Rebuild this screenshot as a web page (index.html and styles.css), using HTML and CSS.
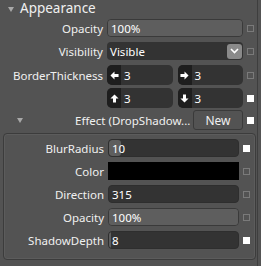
FILE: index.html
```html
<!DOCTYPE html>
<html lang="en">
<head>
<title>Properties</title>
<link rel="stylesheet" href="styles.css">
</head>
<body>
<div class="pane">
<div class="category"><span class="twisty"></span>Appearance</div>

<div class="row first">
<label>Opacity</label>
<div class="field num"><span class="fill" style="width: 100%"></span><span class="val">100%</span></div>
<span class="mark"></span>
</div>

<div class="row">
<label>Visibility</label>
<div class="field select"><span class="val">Visible</span><span class="drop"><svg width="9" height="6" viewBox="0 0 9 6"><path d="M1 1 L4.5 4.5 L8 1" fill="none" stroke="#fff" stroke-width="1.6"/></svg></span></div>
<span class="mark"></span>
</div>

<div class="row">
<label>BorderThickness</label>
<div class="pair">
<div class="field side"><span class="ico"><svg width="9" height="9" viewBox="0 0 10 10"><path d="M0.5 5 L5 0.5 L5 3.3 L9.5 3.3 L9.5 6.7 L5 6.7 L5 9.5 Z" fill="#fff"/></svg></span><span class="val">3</span></div>
<div class="field side"><span class="ico"><svg width="9" height="9" viewBox="0 0 10 10"><path d="M9.5 5 L5 0.5 L5 3.3 L0.5 3.3 L0.5 6.7 L5 6.7 L5 9.5 Z" fill="#fff"/></svg></span><span class="val">3</span></div>
</div>
<span class="mark"></span>
</div>

<div class="row">
<label></label>
<div class="pair">
<div class="field side"><span class="ico"><svg width="9" height="9" viewBox="0 0 10 10"><path d="M5 0.5 L9.5 5 L6.7 5 L6.7 9.5 L3.3 9.5 L3.3 5 L0.5 5 Z" fill="#fff"/></svg></span><span class="val">3</span></div>
<div class="field side"><span class="ico"><svg width="9" height="9" viewBox="0 0 10 10"><path d="M5 9.5 L9.5 5 L6.7 5 L6.7 0.5 L3.3 0.5 L3.3 5 L0.5 5 Z" fill="#fff"/></svg></span><span class="val">3</span></div>
</div>
<span class="mark set"></span>
</div>

<div class="row effect">
<label><span class="twisty small"></span>Effect (DropShadow...</label>
<div class="newcell"><button type="button">New</button></div>
<span class="mark set"></span>
</div>

<div class="sub">
<div class="row first">
<label>BlurRadius</label>
<div class="field num dark"><span class="fill" style="width: 12px"></span><span class="val">10</span></div>
<span class="mark set"></span>
</div>
<div class="row">
<label>Color</label>
<div class="field color"></div>
<span class="mark"></span>
</div>
<div class="row">
<label>Direction</label>
<div class="field num dark"><span class="val">315</span></div>
<span class="mark"></span>
</div>
<div class="row">
<label>Opacity</label>
<div class="field num"><span class="fill" style="width: 100%"></span><span class="val">100%</span></div>
<span class="mark"></span>
</div>
<div class="row">
<label>ShadowDepth</label>
<div class="field num dark"><span class="fill" style="width: 2px"></span><span class="val">8</span></div>
<span class="mark set"></span>
</div>
</div>
</div>
</body>
</html>
```

FILE: styles.css
```css
html, body {
  margin: 0;
  padding: 0;
  background: #535353;
}
body {
  font-family: "Noto Sans", "Open Sans", sans-serif;
  font-size: 11.5px;
  color: #f0f0f0;
  width: 261px;
  height: 266px;
  overflow: hidden;
}
.pane {
  width: 258px;
  height: 266px;
  border-right: 1px solid #3e3e3e;
  box-sizing: border-box;
}
.category {
  height: 17px;
  font-size: 13.5px;
  line-height: 15px;
  padding-left: 8px;
  display: flex;
  align-items: center;
}
.twisty {
  width: 0;
  height: 0;
  border-left: 3px solid transparent;
  border-right: 3px solid transparent;
  border-top: 5px solid #a8a8a8;
  margin-right: 6px;
  margin-top: 1px;
}
.row {
  display: grid;
  grid-template-columns: 103px 136px 7px;
  column-gap: 4px;
  align-items: center;
  height: 18px;
  margin-top: 5px;
}
.row.first {
  margin-top: 2px;
}
.row label {
  text-align: right;
  white-space: nowrap;
}
.field {
  position: relative;
  height: 18px;
  box-sizing: border-box;
  border-radius: 4px;
  background: #333333;
  display: flex;
  align-items: center;
  overflow: hidden;
}
.num {
  background: #5e5e5e;
  border: 1px solid #3a3a3a;
}
.num.dark {
  background: #333333;
  border: 1px solid #2e2e2e;
}
.fill {
  position: absolute;
  left: 0;
  top: 0;
  bottom: 0;
  background: #5e5e5e;
  border-radius: 3px;
}
.val {
  position: relative;
  padding-left: 3px;
  color: #ffffff;
}
.select {
  justify-content: space-between;
}
.drop {
  width: 15px;
  height: 15px;
  margin-right: 1px;
  background: #8a8a8a;
  border-radius: 3px;
  display: flex;
  align-items: center;
  justify-content: center;
}
.pair {
  display: grid;
  grid-template-columns: 1fr 1fr;
  column-gap: 5px;
  height: 20px;
}
.side {
  height: 20px;
  border-radius: 5px;
  background: #333333;
}
.ico {
  width: 14px;
  height: 100%;
  background: #1e1e1e;
  display: flex;
  align-items: center;
  justify-content: center;
}
.mark {
  width: 7px;
  height: 7px;
  box-sizing: border-box;
  border: 1px solid #7a7a7a;
  align-self: center;
}
.mark.set {
  background: #ffffff;
  border-color: #ffffff;
}
.effect {
  height: 20px;
  margin-top: 4px;
}
.effect label {
  display: flex;
  align-items: center;
  padding-left: 17px;
  justify-content: flex-start;
}
.effect label .twisty {
  margin-right: 52px;
}
.newcell {
  display: flex;
  justify-content: flex-end;
}
.newcell button {
  width: 50px;
  height: 20px;
  background: #535353;
  border: 1px solid #3a3a3a;
  border-radius: 3px;
  color: #f0f0f0;
  font-family: inherit;
  font-size: 12px;
  padding: 0;
}
.sub {
  margin: 3px 0 0 3px;
  width: 253px;
  height: 127px;
  box-sizing: border-box;
  border: 1px solid #3c3c3c;
  border-radius: 4px;
  box-shadow: inset 0 0 0 1px #5c5c5c;
  padding-top: 1px;
}
.sub .row {
  grid-template-columns: 100px 131px 7px;
  column-gap: 4px;
}
.sub .row.first {
  margin-top: 4px;
}
.color {
  background: #000000;
  border-radius: 0;
}
```
